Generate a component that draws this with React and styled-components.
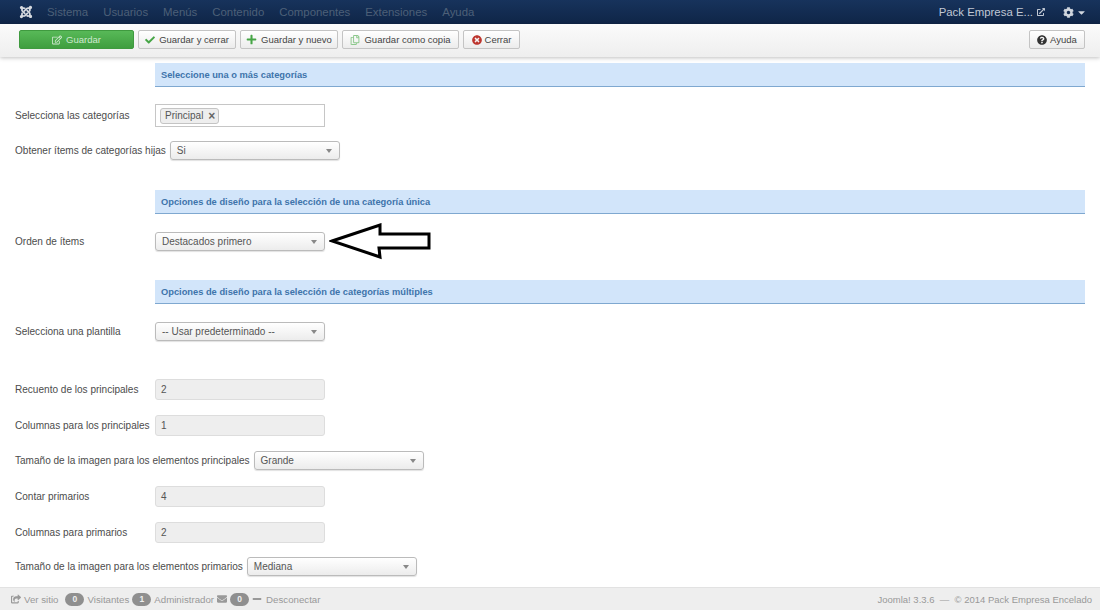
import React from "react";
import styled, { createGlobalStyle } from "styled-components";
import { FaJoomla, FaRegEdit, FaCheck, FaPlus, FaRegCopy, FaTimesCircle, FaQuestionCircle, FaCog, FaCaretDown, FaExternalLinkAlt, FaEnvelope, FaMinus, FaShareSquare } from "react-icons/fa";

const Global = createGlobalStyle`
  html, body { margin: 0; padding: 0; background: #fff; }
  body { font-family: "Liberation Sans", Arial, sans-serif; font-size: 10px; color: #555; }
`;
const Page = styled.div`
  width: 1100px; height: 610px; display: flex; flex-direction: column; overflow: hidden;
`;
const NavBar = styled.header`
  height: 24px; flex: none; display: flex; align-items: center; padding: 0 13px 0 19px;
  background: linear-gradient(#17335c, #0f2547);
`;
const Logo = styled.span`
  display: flex; color: #d4d8de; font-size: 14px; margin-right: 14px;
`;
const NavItem = styled.span`
  color: #4d6078; font-size: 11.4px; margin-right: 15px;
`;
const NavRight = styled.div`
  margin-left: auto; display: flex; align-items: center; color: #c0c8d4; font-size: 11.4px;
`;
const SmallLink = styled.span`
  display: flex; font-size: 8px; margin-left: 4px; margin-right: 18px;
`;
const Cog = styled.span`
  display: flex; align-items: center; gap: 2px; font-size: 11px; color: #d0d6de;
`;
const ToolBar = styled.div`
  height: 33px; flex: none; box-sizing: border-box; padding: 6px 15px 0 19px; display: flex; gap: 4px;
  align-items: flex-start;
  background: linear-gradient(#fbfbfb, #eeeeee);
  box-shadow: 0 1px 4px rgba(0,0,0,.25);
  position: relative;
`;
const ToolButton = styled.button`
  height: 19px; box-sizing: border-box; display: flex; align-items: center; justify-content: center; gap: ${p => p.$gap ?? 4}px;
  width: ${p => p.$w}px; padding: 0; margin-left: ${p => p.$push ? "auto" : "0"};
  border-radius: 2px; font: 9.5px "Liberation Sans", Arial, sans-serif;
  color: ${p => p.$primary ? "#cfe8cf" : "#444"};
  border: 1px solid ${p => p.$primary ? "#3f9a3f" : "#c4c4c4"};
  background: ${p => p.$primary ? "linear-gradient(#58b958, #3f9e3f)" : "linear-gradient(#fff, #ececec)"};
  svg { font-size: ${p => p.$icon || 10}px; color: ${p => p.$color || "inherit"}; }
`;
const Main = styled.main`
  flex: 1; min-height: 0; padding: 6px 15px 0; display: flex; flex-direction: column;
`;
const Heading = styled.h3`
  margin: ${p => p.$top || 0}px 0 0 140px; height: 24px; box-sizing: border-box; padding-left: 6px;
  display: flex; align-items: center; font-size: 9.3px; font-weight: bold; color: #3e74ab;
  background: #d2e5fa; border-bottom: 1px solid #7fa8d0;
`;
const Row = styled.div`
  position: relative; display: flex; align-items: center; margin-top: ${p => p.$top}px;
`;
const Label = styled.label`
  min-width: 140px; padding-right: 4px; box-sizing: border-box; font-size: 10.05px; color: #4c4c4c;
`;
const Select = styled.div`
  width: ${p => p.$w || 170}px; height: 19px; box-sizing: border-box; display: flex; align-items: center; justify-content: space-between;
  padding: 0 7px 0 6px; font-size: 10px; color: #555; border: 1px solid #bbb; border-radius: 3px;
  background: linear-gradient(#fff, #ececec);
  box-shadow: 0 1px 1px rgba(0,0,0,.12);
`;
const Caret = styled.span`
  width: 0; height: 0; border-left: 3px solid transparent; border-right: 3px solid transparent; border-top: 4px solid #888;
`;
const TagBox = styled.div`
  width: 170px; height: 23px; box-sizing: border-box; display: flex; align-items: center; padding-left: 4px;
  border: 1px solid #c6c6c6; background: #fff;
`;
const Tag = styled.span`
  display: flex; align-items: center; gap: 5px; height: 16px; box-sizing: border-box; padding: 0 3px 0 4px; font-size: 10px; color: #555;
  border: 1px solid #c4c4c4; border-radius: 3px; background: #eee;
`;
const TagClose = styled.span`
  font-size: 12px; font-weight: bold; color: #666; line-height: 1;
`;
const Field = styled.div`
  width: 170px; height: 21px; box-sizing: border-box; display: flex; align-items: center; padding-left: 5px;
  font-size: 10px; color: #555; background: #eee; border: 1px solid #ddd; border-radius: 3px;
`;
const Arrow = styled.svg`
  position: absolute; left: 314px; top: -9px;
`;
const Footer = styled.footer`
  height: 23px; flex: none; box-sizing: border-box; padding: 0 8px 0 11px; display: flex; align-items: center;
  background: #eee; border-top: 1px solid #e2e2e2; color: #999; font-size: 9.7px;
`;
const FooterItem = styled.span`
  display: flex; align-items: center; gap: ${p => p.$gap ?? 3}px; margin-right: ${p => p.$mr ?? 3}px;
  svg { font-size: 10px; }
`;
const Badge = styled.span`
  display: inline-flex; align-items: center; justify-content: center; width: 19px; height: 13px; border-radius: 7px;
  background: #8f8f8f; color: #eee; font-size: 8.5px; font-weight: bold;
`;
const FooterRight = styled.span`
  margin-left: auto; font-size: 9.5px;
`;

const nav = ["Sistema", "Usuarios", "Menús", "Contenido", "Componentes", "Extensiones", "Ayuda"];
const Sel = ({ v, w }) => <Select $w={w}>{v}<Caret /></Select>;

export default function App() {
  return (
    <Page>
      <Global />
      <NavBar>
        <Logo><FaJoomla /></Logo>
        {nav.map(n => <NavItem key={n}>{n}</NavItem>)}
        <NavRight>
          Pack Empresa E...<SmallLink><FaExternalLinkAlt /></SmallLink>
          <Cog><FaCog /><FaCaretDown /></Cog>
        </NavRight>
      </NavBar>
      <ToolBar>
        <ToolButton $primary $w={115}><FaRegEdit />Guardar</ToolButton>
        <ToolButton $w={98} $color="#46a546"><FaCheck />Guardar y cerrar</ToolButton>
        <ToolButton $w={98} $color="#46a546" $icon={11}><FaPlus />Guardar y nuevo</ToolButton>
        <ToolButton $w={117} $color="#8cc88c"><FaRegCopy />Guardar como copia</ToolButton>
        <ToolButton $w={57} $color="#bd362f" $gap={3}><FaTimesCircle />Cerrar</ToolButton>
        <ToolButton $push $w={56} $color="#333" $gap={3}><FaQuestionCircle />Ayuda</ToolButton>
      </ToolBar>
      <Main>
        <Heading>Seleccione una o más categorías</Heading>
        <Row $top={17}><Label>Selecciona las categorías</Label><TagBox><Tag>Principal <TagClose>×</TagClose></Tag></TagBox></Row>
        <Row $top={14}><Label>Obtener ítems de categorías hijas</Label><Sel v="Si" /></Row>
        <Heading $top={30}>Opciones de diseño para la selección de una categoría única</Heading>
        <Row $top={18}>
          <Label>Orden de ítems</Label><Sel v="Destacados primero" />
          <Arrow width="104" height="38" viewBox="0 0 104 38">
            <polygon points="3,18 51,2 51,11 100,11 100,25 50,25 51,34" fill="#fff" stroke="#000" strokeWidth="3" />
          </Arrow>
        </Row>
        <Heading $top={29}>Opciones de diseño para la selección de categorías múltiples</Heading>
        <Row $top={18}><Label>Selecciona una plantilla</Label><Sel v="-- Usar predeterminado --" /></Row>
        <Row $top={38}><Label>Recuento de los principales</Label><Field>2</Field></Row>
        <Row $top={15}><Label>Columnas para los principales</Label><Field>1</Field></Row>
        <Row $top={15}><Label>Tamaño de la imagen para los elementos principales</Label><Sel v="Grande" /></Row>
        <Row $top={16}><Label>Contar primarios</Label><Field>4</Field></Row>
        <Row $top={15}><Label>Columnas para primarios</Label><Field>2</Field></Row>
        <Row $top={14}><Label>Tamaño de la imagen para los elementos primarios</Label><Sel v="Mediana" /></Row>
      </Main>
      <Footer>
        <FooterItem $mr={7}><FaShareSquare />Ver sitio</FooterItem>
        <FooterItem><Badge>0</Badge>Visitantes</FooterItem>
        <FooterItem><Badge>1</Badge>Administrador</FooterItem>
        <FooterItem><FaEnvelope /><Badge>0</Badge></FooterItem>
        <FooterItem $gap={4}><FaMinus />Desconectar</FooterItem>
        <FooterRight>Joomla! 3.3.6 &nbsp;—&nbsp; © 2014 Pack Empresa Encelado</FooterRight>
      </Footer>
    </Page>
  );
}
